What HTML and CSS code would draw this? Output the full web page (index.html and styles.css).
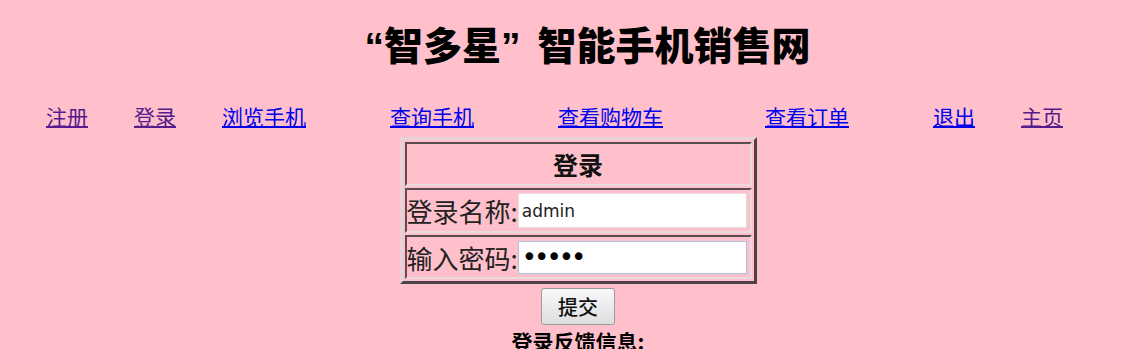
FILE: index.html
```html
<!DOCTYPE html>
<html lang="zh-CN">
<head>
<meta charset="UTF-8" />
<meta name="viewport" content="width=device-width, initial-scale=1.0" />
<title>“智多星”智能手机销售网</title>
<link rel="stylesheet" href="styles.css">
</head>
<body>
<h1 class="title"><span class="quote">“</span>智多星<span class="quote close">”</span> 智能手机销售网</h1>

<div class="nav">
  <a href="#" class="visited">注册</a>
  <a href="#" class="visited gap-s">登录</a>
  <a href="#" class="gap-s">浏览手机</a>
  <a href="#" class="gap-m">查询手机</a>
  <a href="#" class="gap-m">查看购物车</a>
  <a href="#" class="gap-l">查看订单</a>
  <a href="#" class="gap-m">退出</a>
  <a href="#" class="visited gap-s">主页</a>
</div>

<form class="login" onsubmit="return false;">
  <table class="login-table">
    <tr>
      <th><div class="cell head">登录</div></th>
    </tr>
    <tr>
      <td><div class="cell name-row">登录名称:<input type="text" class="field name" value="admin" /></div></td>
    </tr>
    <tr>
      <td><div class="cell pwd-row">输入密码:<input type="password" class="field pwd" value="12345" /></div></td>
    </tr>
  </table>
  <input type="submit" class="submit" value="提交" />
  <p class="feedback">登录反馈信息:</p>
</form>
</body>
</html>
```

FILE: styles.css
```css
body {
  margin: 0;
  background: #ffc0cb;
  font-family: "Noto Sans CJK SC", sans-serif;
  color: #000;
  overflow: hidden;
}
.title {
  margin: 14px 0 0;
  padding-left: 42px;
  font-size: 39px;
  line-height: 58px;
  font-weight: 900;
  text-align: center;
}
.quote {
  font-family: "Liberation Sans", sans-serif;
  font-weight: bold;
}
.close {
  margin-right: 8px;
}
.nav {
  display: flex;
  margin-top: 25px;
  padding-left: 46px;
  font-size: 21px;
  line-height: 30px;
}
.nav a {
  color: #0000ee;
  text-decoration: underline;
  text-underline-offset: 1px;
}
.nav a.visited {
  color: #551a8b;
}
.gap-s {
  margin-left: 46px;
}
.gap-m {
  margin-left: 84px;
}
.gap-l {
  margin-left: 102px;
}
.login {
  display: flex;
  flex-direction: column;
  align-items: center;
  margin-top: 6px;
  padding-left: 23px;
}
.login-table {
  border-collapse: separate;
  border-spacing: 2px;
  border: 3px solid;
  border-color: #e4d4d8 #4a4446 #4a4446 #e4d4d8;
}
.login-table th,
.login-table td {
  padding: 0;
  border: 2px solid;
  border-color: #5a4c50 #eadadd #eadadd #5a4c50;
}
.cell {
  display: flex;
  align-items: center;
  width: 343px;
  font-size: 26px;
  color: #222;
}
.head {
  justify-content: center;
  height: 40px;
  font-size: 25px;
  font-weight: bold;
  color: #111;
}
.name-row {
  height: 41px;
}
.pwd-row {
  height: 40px;
}
.field {
  box-sizing: border-box;
  width: 229px;
  margin: 0;
  padding: 0 3px;
  background: #fff;
  font-family: "DejaVu Sans", sans-serif;
  font-size: 17px;
  color: #222;
  outline: none;
}
.name {
  height: 35px;
  border: 1px solid #e2dcdc;
}
.pwd {
  height: 33px;
  border: 1px solid #a9c2e2;
  font-size: 26px;
  letter-spacing: -3px;
  color: #000;
}
.submit {
  margin-top: 4px;
  width: 74px;
  height: 37px;
  padding: 0;
  border: 1px solid #9a9a9a;
  border-radius: 3px;
  background: linear-gradient(#f9f9f9, #dedede);
  font-family: "Noto Sans CJK SC", sans-serif;
  font-size: 20px;
  font-weight: 500;
  color: #111;
  cursor: pointer;
}
.feedback {
  margin: 1px 0 0;
  font-size: 21px;
  line-height: 30px;
  font-weight: bold;
}
```
